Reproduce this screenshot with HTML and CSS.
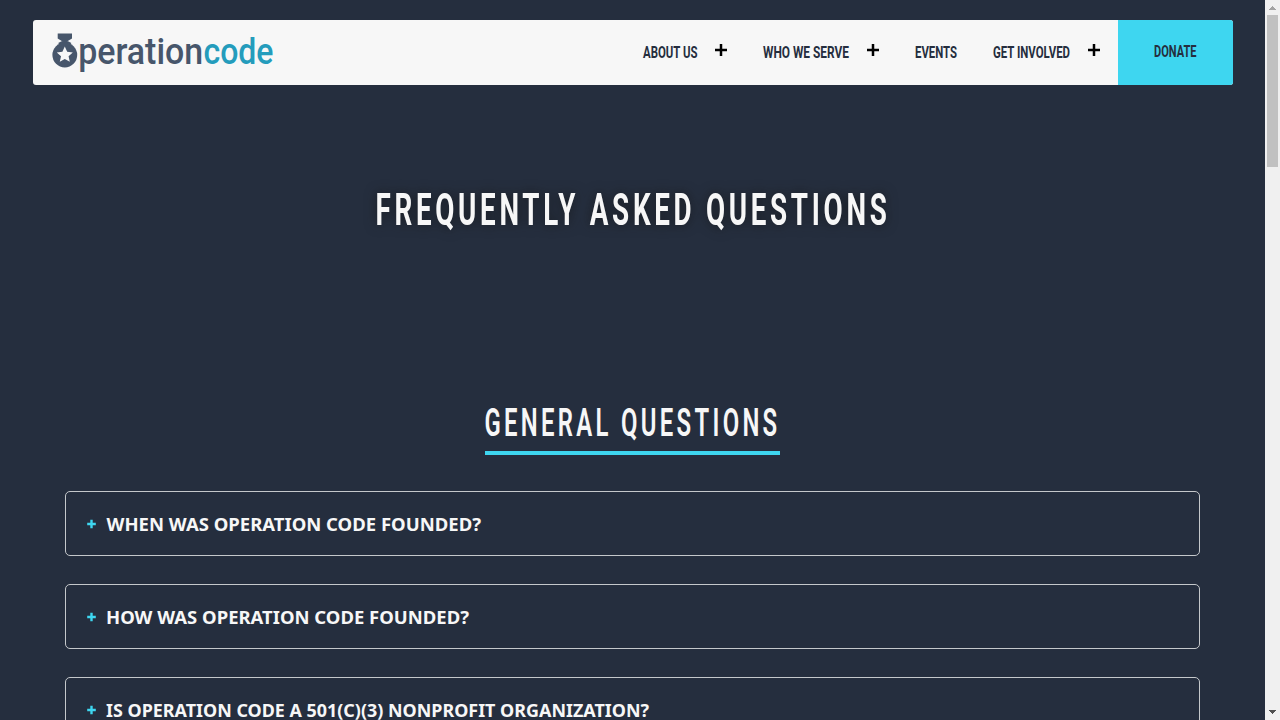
FILE: index.html
```html
<!DOCTYPE html>
<html lang="en">
<head>
<meta charset="utf-8">
<title>Frequently Asked Questions | Operation Code</title>
<link rel="stylesheet" href="styles.css">
</head>
<body>
<div class="page">
  <header class="nav">
    <a class="brand" aria-label="Operation Code">
      <svg class="logo" width="224" height="44" viewBox="0 0 224 44">
        <g fill="#47566b">
          <path d="M6.700 2.600h14.300v5L16 10.400h-4.400L6.700 7.600z"/>
          <path d="M7.200 12.100Q13.800 7.300 20.400 12.100L19.300 13.500Q13.800 10.300 8.300 13.500z"/>
          <circle cx="13.800" cy="24" r="12.400"/>
        </g>
        <path fill="#f7f7f7" d="M13.800 15.600l2.400 5.200 5.600.6-4.200 3.800 1.200 5.600-5-2.900-5 2.900 1.200-5.600-4.200-3.800 5.600-.6z"/>
        <text class="logo-text" y="33.400"><tspan class="logo-first" x="27.200" textLength="125" lengthAdjust="spacingAndGlyphs">peration</tspan><tspan class="logo-second" x="152.500" textLength="70" lengthAdjust="spacingAndGlyphs">code</tspan></text>
      </svg>
    </a>
    <nav class="links">
      <a class="link"><svg class="label" width="54" height="20"><text x="0" y="16" textLength="54.500" lengthAdjust="spacingAndGlyphs">ABOUT US</text></svg><svg class="plus" width="12" height="12"><path d="M0 6h12M6 0v12"/></svg></a>
      <a class="link"><svg class="label" width="86" height="20"><text x="0" y="16" textLength="86" lengthAdjust="spacingAndGlyphs">WHO WE SERVE</text></svg><svg class="plus" width="12" height="12"><path d="M0 6h12M6 0v12"/></svg></a>
      <a class="link"><svg class="label" width="42" height="20"><text x="0" y="16" textLength="42" lengthAdjust="spacingAndGlyphs">EVENTS</text></svg></a>
      <a class="link"><svg class="label" width="77" height="20"><text x="0" y="16" textLength="77" lengthAdjust="spacingAndGlyphs">GET INVOLVED</text></svg><svg class="plus" width="12" height="12"><path d="M0 6h12M6 0v12"/></svg></a>
    </nav>
    <a class="donate"><svg class="label" width="43" height="20"><text x="0" y="15" textLength="42.500" lengthAdjust="spacingAndGlyphs">DONATE</text></svg></a>
  </header>
  <main>
    <h1 class="title"><svg width="520" height="60"><text x="2.500" y="45" textLength="515" lengthAdjust="spacingAndGlyphs">FREQUENTLY ASKED QUESTIONS</text></svg></h1>
    <h2 class="section-title"><svg width="295" height="56"><text x="-0.500" y="41" textLength="296" lengthAdjust="spacingAndGlyphs">GENERAL QUESTIONS</text></svg></h2>
    <div class="cards">
      <section class="card"><svg class="card-plus" width="9" height="9"><path d="M0.200 4h8.600M4.500 -0.300v8.600"/></svg><svg class="question" width="600" height="28"><text x="-0.500" y="20" textLength="374.500" lengthAdjust="spacingAndGlyphs">WHEN WAS OPERATION CODE FOUNDED?</text></svg></section>
      <section class="card"><svg class="card-plus" width="9" height="9"><path d="M0.200 4h8.600M4.500 -0.300v8.600"/></svg><svg class="question" width="600" height="28"><text x="-1" y="20" textLength="363" lengthAdjust="spacingAndGlyphs">HOW WAS OPERATION CODE FOUNDED?</text></svg></section>
      <section class="card"><svg class="card-plus" width="9" height="9"><path d="M0.200 4h8.600M4.500 -0.300v8.600"/></svg><svg class="question" width="600" height="28"><text x="-1" y="20" textLength="543" lengthAdjust="spacingAndGlyphs">IS OPERATION CODE A 501(C)(3) NONPROFIT ORGANIZATION?</text></svg></section>
    </div>
  </main>
</div>
<div class="scrollbar">
  <svg width="15" height="14" shape-rendering="crispEdges"><path fill="#a3a3a3" d="M4 10h7L7.500 6z"/></svg>
  <div class="thumb"></div>
  <svg class="down" width="15" height="14" shape-rendering="crispEdges"><path fill="#505050" d="M4 4h7L7.500 8z"/></svg>
</div>
</body>
</html>
```
FILE: styles.css
```css
* { box-sizing: border-box; }
body {
  margin: 0;
  display: flex;
  height: 720px;
  overflow: hidden;
  background: #252e3e;
  font-family: Roboto, "Liberation Sans", sans-serif;
}
svg { display: block; flex: none; overflow: visible; }
.page { width: 1265px; height: 720px; padding: 20px 32px 0 33px; overflow: hidden; }
.nav {
  display: flex;
  align-items: stretch;
  height: 65px;
  background: #f7f7f7;
  border-radius: 3px;
  overflow: hidden;
}
.brand { padding: 11px 0 0 18px; }
.logo-text { font-size: 36px; font-weight: 500; }
.logo-first { fill: #47566b; }
.logo-second { fill: #249cbc; }
.links { display: flex; gap: 36px; margin-left: auto; padding: 22px 18px 0 0; }
.link { display: flex; gap: 18px; }
.label { font-size: 17px; font-weight: 700; fill: #252e3e; }
.plus { margin-top: 2px; stroke: #000; stroke-width: 2.500px; }
.donate { width: 115px; padding: 22px 36px; background: #3ed6f0; }
.title {
  display: flex;
  justify-content: center;
  margin: 95px 0 0;
  font-size: 45px;
  font-weight: 700;
  letter-spacing: 6px;
  fill: #f7f7f7;
}
.title text { filter: drop-shadow(0 0 6px rgba(20, 20, 20, .75)); }
.section-title {
  width: 295px;
  height: 60px;
  margin: 155px 0 36px 452px;
  border-bottom: 4px solid #3ed6f0;
  font-size: 39.500px;
  font-weight: 600;
  letter-spacing: 5.500px;
  fill: #f7f7f7;
}
.cards { display: flex; flex-direction: column; gap: 28px; padding: 0 0 0 32px; width: 1167px; }
.card {
  display: flex;
  align-items: flex-start;
  gap: 11px;
  height: 65px;
  padding: 19px 21px;
  border: 1px solid #c5c8cb;
  border-radius: 5px;
}
.card-plus { margin-top: 9px; stroke: #3ed6f0; stroke-width: 2.400px; }
.question { font: 700 18px "Noto Sans", sans-serif; fill: #f7f7f7; }
.scrollbar { display: flex; flex-direction: column; width: 15px; height: 720px; background: #f0f0f0; }
.thumb { width: 11px; height: 152px; margin: 1px 2px 0; background: #c1c1c1; }
.down { margin-top: auto; }
```
